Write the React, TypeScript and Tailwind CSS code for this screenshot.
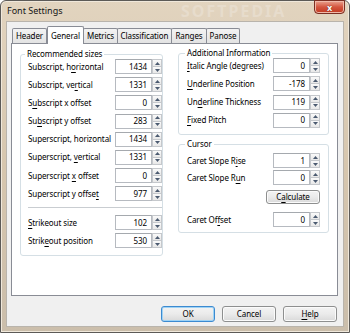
import React from "react";

function Mn({ text, u }: { text: string; u: number }) {
  if (u < 0) return <span>{text}</span>;
  return (
    <span>
      {text.slice(0, u)}
      <span className="underline decoration-[0.8px] underline-offset-[1.5px]">{text[u]}</span>
      {text.slice(u + 1)}
    </span>
  );
}

function Arrow({ up }: { up: boolean }) {
  return (
    <svg width="5" height="3" viewBox="0 0 5 3">
      <path d={up ? "M0 3 L2.5 0 L5 3 Z" : "M0 0 L2.5 3 L5 0 Z"} fill="#4b5a70" />
    </svg>
  );
}

function NumBox({ value }: { value: string }) {
  return (
    <div className="flex h-[15px]">
      <div className="w-[37px] h-[15px] border border-[#b6bac0] border-t-[#a5a9ae] bg-white flex items-center justify-end pr-[4px] leading-none">
        {value}
      </div>
      <div className="w-[10px] h-[15px] flex flex-col border border-[#c5c8cc] bg-[#f4f4f4]">
        <div className="flex-1 flex items-center justify-center border-b border-[#c5c8cc] bg-gradient-to-b from-[#fafafa] to-[#e8e8e8]">
          <Arrow up />
        </div>
        <div className="flex-1 flex items-center justify-center bg-gradient-to-b from-[#fafafa] to-[#e8e8e8]">
          <Arrow up={false} />
        </div>
      </div>
    </div>
  );
}

function Row({ label, u, value }: { label: string; u: number; value: string }) {
  return (
    <div className="flex items-center justify-between h-[15px]">
      <span className="leading-none whitespace-nowrap">
        <Mn text={label} u={u} />
      </span>
      <NumBox value={value} />
    </div>
  );
}

function Legend({ text, left }: { text: string; left: string }) {
  return (
    <span className={`absolute top-[-8px] ${left} bg-white px-[2px] leading-[13px] whitespace-nowrap`}>
      {text}
    </span>
  );
}

function Btn({ children, focus }: { children: React.ReactNode; focus?: boolean }) {
  return (
    <div
      className={
        "w-[54px] h-[16px] rounded-[3px] border flex items-center justify-center leading-none bg-gradient-to-b from-[#f3f3f3] via-[#ebebeb] to-[#d9d9d9] " +
        (focus
          ? "border-[#3c8ad0] shadow-[inset_0_0_0_1px_#9fd3f5]"
          : "border-[#8e8f8f] shadow-[inset_0_0_0_1px_#fbfbfb]")
      }
    >
      {children}
    </div>
  );
}

export default function App() {
  const tabs = [
    { t: "Header", w: "w-[35px]" },
    { t: "General", w: "w-[37px]", sel: true },
    { t: "Metrics", w: "w-[35px]" },
    { t: "Classification", w: "w-[55px]" },
    { t: "Ranges", w: "w-[36px]" },
    { t: "Panose", w: "w-[34px]" },
  ];

  return (
    <div className="w-[350px] h-[333px] overflow-hidden font-['Noto_Sans','Open_Sans',sans-serif] text-[8px] tracking-[-0.1px] text-black">
      <div className="w-[350px] h-[333px] rounded-t-[6px] border border-[#5c5a57] bg-gradient-to-b from-[#e2d4bf] via-[#d6c6ae] to-[#cbbeab] flex flex-col px-[5px] pb-[5px] shadow-[inset_0_0_0_1px_#f0e8db]">
        {/* Title bar */}
        <div className="h-[20px] flex items-start justify-between pl-[1px] relative">
          <span className="mt-[4px] text-[9px] leading-[12px] tracking-normal text-[#141414]">Font Settings</span>
          <span className="absolute left-[175px] top-[0px] text-[16px] font-bold tracking-[2px] text-[#ebe2d6] opacity-60 leading-[20px]">
            SOFTPEDIA
          </span>
          <div className="w-[31px] h-[14px] mt-[-1px] mr-[-1px] rounded-b-[4px] border border-[#7a2e22] bg-gradient-to-b from-[#e8a18f] via-[#d4553f] to-[#c0381f] flex items-center justify-center shadow-[inset_0_0_0_1px_#f0b8a8] relative z-10">
            <span className="text-white font-bold text-[9px] leading-none [text-shadow:0_0_1px_#3a1a10]">x</span>
          </div>
        </div>

        {/* Client area */}
        <div className="flex-1 bg-[#f0f0f0] shadow-[inset_0_0_0_1px_#b9b4ac] flex flex-col pl-[5px] pr-[6px] pt-[5px] pb-[5px]">
          {/* Tabs */}
          <div className="flex items-end h-[17px] pl-[1px]">
            {tabs.map((tb) =>
              tb.sel ? (
                <div
                  key={tb.t}
                  className={`${tb.w} h-[18px] -mb-[1px] relative z-10 bg-white border border-b-0 border-[#898c95] rounded-t-[2px] flex items-center justify-center leading-none`}
                >
                  {tb.t}
                </div>
              ) : (
                <div
                  key={tb.t}
                  className={`${tb.w} h-[15px] bg-gradient-to-b from-[#f3f3f3] to-[#e3e3e3] border border-b-0 border-[#898c95] -ml-[1px] first:ml-0 rounded-t-[2px] flex items-center justify-center leading-none`}
                >
                  {tb.t}
                </div>
              )
            )}
          </div>

          {/* Tab panel */}
          <div className="h-[253px] bg-white border border-[#898c95] flex gap-[15px] px-[8px] pt-[10px]">
            {/* Left group */}
            <div className="relative w-[143px] h-[202px] border border-[#d5dfe5] rounded-[3px] pl-[7px] pt-[4px] flex flex-col">
              <Legend text="Recommended sizes" left="left-[4px]" />
              <div className="flex flex-col gap-[3.2px]">
                <Row label="Subscript, horizontal" u={12} value="1434" />
                <Row label="Subscript, vertical" u={13} value="1331" />
                <Row label="Subscript x offset" u={1} value="0" />
                <Row label="Subscript y offset" u={2} value="283" />
                <Row label="Superscript, horizontal" u={-1} value="1434" />
                <Row label="Superscript, vertical" u={13} value="1331" />
                <Row label="Superscript x offset" u={12} value="0" />
                <Row label="Superscript y offset" u={19} value="977" />
              </div>
              <div className="h-[1px] bg-[#c9cdd1] mt-[6px]" />
              <div className="flex flex-col gap-[3px] mt-[7px]">
                <Row label="Strikeout size" u={0} value="102" />
                <Row label="Strikeout position" u={5} value="530" />
              </div>
            </div>

            {/* Right column */}
            <div className="flex flex-col gap-[9px] w-[151px] -mt-[1px]">
              <div className="relative h-[82px] border border-[#d5dfe5] rounded-[3px] pl-[8px] pr-[8px] pt-[4px] flex flex-col gap-[3.3px]">
                <Legend text="Additional Information" left="left-[6px]" />
                <Row label="Italic Angle (degrees)" u={0} value="0" />
                <Row label="Underline Position" u={0} value="-178" />
                <Row label="Underline Thickness" u={2} value="119" />
                <Row label="Fixed Pitch" u={0} value="0" />
              </div>
              <div className="relative h-[89px] border border-[#d5dfe5] rounded-[3px] pl-[8px] pr-[8px] pt-[8px] flex flex-col">
                <Legend text="Cursor" left="left-[6px]" />
                <div className="flex flex-col gap-[2px]">
                  <Row label="Caret Slope Rise" u={13} value="1" />
                  <Row label="Caret Slope Run" u={13} value="0" />
                </div>
                <div className="flex justify-end mt-[5px]">
                  <div className="w-[54px] h-[14px] rounded-[3px] border border-[#8e8f8f] shadow-[inset_0_0_0_1px_#fbfbfb] bg-gradient-to-b from-[#f3f3f3] via-[#ebebeb] to-[#d9d9d9] flex items-center justify-center leading-none">
                    <Mn text="Calculate" u={1} />
                  </div>
                </div>
                <div className="mt-[8px]">
                  <Row label="Caret Offset" u={8} value="0" />
                </div>
              </div>
            </div>
          </div>

          {/* Buttons */}
          <div className="flex justify-end gap-[7px] mt-[10px] pr-[1px]">
            <Btn focus>OK</Btn>
            <Btn>Cancel</Btn>
            <Btn>
              <Mn text="Help" u={0} />
            </Btn>
          </div>
        </div>
      </div>
    </div>
  );
}
